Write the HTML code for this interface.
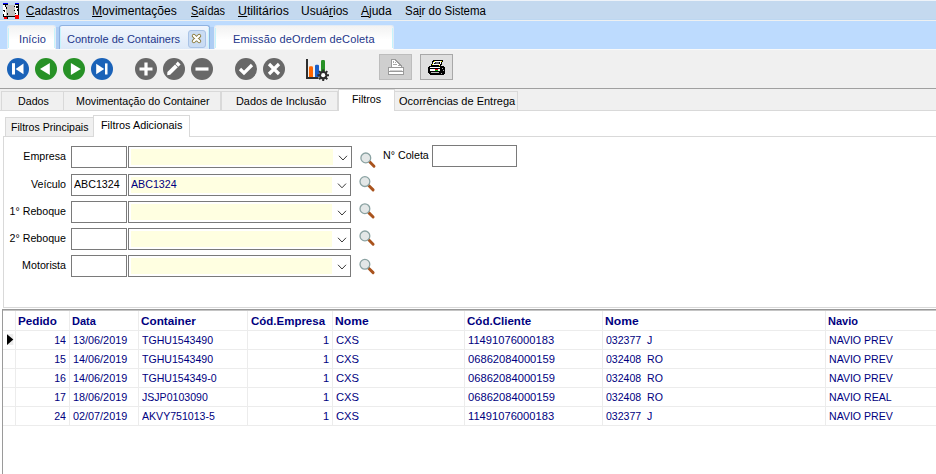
<!DOCTYPE html>
<html><head><meta charset="utf-8"><style>
*{margin:0;padding:0;box-sizing:border-box}
html,body{width:936px;height:474px;overflow:hidden}
body{position:relative;background:#fff;font-family:"Liberation Sans",sans-serif;font-size:11px;color:#000}
.a{position:absolute;white-space:nowrap}
.mn{font-size:12px;line-height:20px;top:1px;color:#000;transform-origin:0 0}
.mn u{text-decoration:none;position:relative}
.mn u::after{content:"";position:absolute;left:0;right:0;top:12px;height:1px;background:#000}
.tt{font-size:11px;line-height:20px;color:#23368a}
.pt{position:absolute;top:91px;height:20px;background:#f0f0f0;border:1px solid #d9d9d9;border-bottom:none}
.pl{font-size:11px;line-height:14px;color:#000;transform:scaleX(.97);transform-origin:0 0}
.box{position:absolute;border:1px solid #7a7a7a;background:#fff;height:22px}
.cb{position:absolute;border:1px solid #7a7a7a;background:#fff;height:22px}
.cb i{position:absolute;left:2px;top:2px;bottom:2px;background:#ffffe1}
.lbl{font-size:11px;line-height:14px;color:#000;transform:scaleX(.97);transform-origin:0 0}
.r{text-align:right;transform-origin:100% 0}
.hd{font-weight:bold;color:#000080;font-size:11px;line-height:14px;transform-origin:0 0}
.gd{color:#000080;font-size:11px;line-height:14px;transform:scaleX(.96);transform-origin:0 0}
.gr{text-align:right;transform-origin:100% 0}
.vl{position:absolute;top:311px;width:1px;height:114px;background:#ececec}
.hl{position:absolute;left:3px;width:933px;height:1px;background:#ececec}
</style></head><body>

<!-- menu bar -->
<div class="a" style="left:0;top:0;width:936px;height:20px;background:#c4d9ef"></div>
<div class="a" style="left:0;top:0;width:936px;height:1px;background:#eef3f9"></div>
<div class="a" style="left:0;top:19px;width:936px;height:1px;background:#bdd7f0"></div>
<div class="a" style="left:0;top:20px;width:936px;height:1px;background:#eef0f0"></div>
<!-- app icon -->
<svg class="a" style="left:0;top:0" width="22" height="22" viewBox="0 0 22 22" shape-rendering="crispEdges">
<rect x="3" y="5" width="16" height="12" fill="#fff"/>
<rect x="6" y="5" width="9" height="11" fill="#c0c0c0"/>
<rect x="3" y="3" width="5" height="1" fill="#0000ff"/><rect x="15" y="3" width="4" height="1" fill="#0000ff"/>
<rect x="3" y="4" width="5" height="1" fill="#000"/><rect x="15" y="4" width="4" height="1" fill="#000"/>
<rect x="5" y="5" width="1" height="2" fill="#000"/><rect x="6" y="7" width="1" height="2" fill="#000"/>
<rect x="3" y="10" width="2" height="1" fill="#000"/><rect x="4" y="11" width="1" height="1" fill="#000"/>
<rect x="7" y="13" width="1" height="2" fill="#000"/><rect x="3" y="14" width="1" height="3" fill="#000"/>
<rect x="14" y="6" width="1" height="1" fill="#000"/><rect x="16" y="6" width="2" height="2" fill="#000"/>
<rect x="18" y="4" width="1" height="6" fill="#000"/><rect x="17" y="9" width="1" height="2" fill="#000"/>
<rect x="14" y="10" width="1" height="1" fill="#000"/><rect x="18" y="10" width="1" height="5" fill="#000"/>
<rect x="15" y="13" width="1" height="1" fill="#000"/>
<rect x="3" y="16" width="12" height="1" fill="#000"/>
<rect x="4" y="17" width="3" height="2" fill="#ff0000"/><rect x="7" y="17" width="1" height="2" fill="#000"/>
<rect x="15" y="15" width="4" height="4" fill="#ff0000"/>
</svg>
<div class="a mn" style="left:26px;transform:scaleX(.974)"><u>C</u>adastros</div>
<div class="a mn" style="left:92px;transform:scaleX(1.01)"><u>M</u>ovimentações</div>
<div class="a mn" style="left:191px;transform:scaleX(.91)"><u>S</u>aídas</div>
<div class="a mn" style="left:238px;transform:scaleX(1.03)"><u>U</u>tilitários</div>
<div class="a mn" style="left:301px">Usuá<u>r</u>ios</div>
<div class="a mn" style="left:361px"><u>A</u>juda</div>
<div class="a mn" style="left:405px;transform:scaleX(.955)">Sa<u>i</u>r do Sistema</div>

<!-- tab strip -->
<div class="a" style="left:0;top:21px;width:936px;height:28px;background:#bddbfe"></div>
<div class="a" style="left:56px;top:27px;width:3px;height:22px;background:#aecdf4"></div>
<div class="a" style="left:210px;top:27px;width:4px;height:22px;background:#aecdf4"></div>
<div class="a" style="left:7px;top:25px;width:49px;height:24px;background:linear-gradient(#f2f2f2,#fff 60%);border:1px solid #e4ecf5;border-bottom:none;border-radius:3px 3px 0 0"></div>
<div class="a tt" style="left:19px;top:29px;letter-spacing:.1px">Início</div>
<div class="a" style="left:59px;top:25px;width:151px;height:24px;background:linear-gradient(#f1f6fd,#dde9f8);border:1px solid #8fb2e0;border-bottom:none;border-radius:3px 3px 0 0"></div>
<div class="a tt" style="left:67px;top:29px">Controle de Containers</div>
<div class="a" style="left:188px;top:30px;width:18px;height:18px;background:#cadcf3;border:1px solid #a9c3e6;border-radius:3px"></div>
<svg class="a" style="left:190px;top:32px" width="13" height="13" viewBox="0 0 13 13"><path d="M3.8 3.8L9.2 9.2M9.2 3.8L3.8 9.2" stroke="#8b7b3c" stroke-width="4" stroke-linecap="round"/><path d="M3.8 3.8L9.2 9.2M9.2 3.8L3.8 9.2" stroke="#fff" stroke-width="2.2" stroke-linecap="round"/></svg>
<div class="a" style="left:214px;top:25px;width:180px;height:24px;background:linear-gradient(#f2f2f2,#fff 60%);border:1px solid #e4ecf5;border-bottom:none;border-radius:3px 3px 0 0"></div>
<div class="a tt" style="left:233px;top:29px;letter-spacing:.15px">Emissão deOrdem deColeta</div>

<div class="a" style="left:8px;top:28px;width:1px;height:20px;background:#c6f4fc"></div>
<div class="a" style="left:54px;top:28px;width:1px;height:20px;background:#c6f4fc"></div>
<div class="a" style="left:60px;top:28px;width:1px;height:20px;background:#c6f4fc"></div>
<div class="a" style="left:208px;top:28px;width:1px;height:20px;background:#c6f4fc"></div>
<div class="a" style="left:215px;top:28px;width:1px;height:20px;background:#c6f4fc"></div>
<div class="a" style="left:392px;top:28px;width:1px;height:20px;background:#c6f4fc"></div>
<!-- toolbar -->
<div class="a" style="left:0;top:49px;width:936px;height:39px;background:#f0f0f0"></div>
<div class="a" style="left:0;top:49px;width:936px;height:1px;background:#f9f9f9"></div>
<div class="a" style="left:0;top:88px;width:936px;height:1px;background:#a0a0a0"></div>
<svg class="a" style="left:0;top:49px" width="340" height="39" viewBox="0 49 340 39">
<g>
<circle cx="18" cy="69" r="11" fill="#1a62b8"/>
<rect x="12" y="63.2" width="3" height="11.3" fill="#fff"/><path d="M15.6 68.9L23.5 63.6V74.2Z" fill="#fff"/>
<circle cx="46" cy="69" r="11" fill="#279126"/>
<path d="M40 69L49.8 63V75Z" fill="#fff"/>
<circle cx="74" cy="69" r="11" fill="#279126"/>
<path d="M80.8 69L70.9 63V75Z" fill="#fff"/>
<circle cx="102" cy="69" r="11" fill="#1a62b8"/>
<rect x="105" y="63.4" width="2.5" height="11.1" fill="#fff"/><path d="M104.2 68.9L96.2 63.8V74.2Z" fill="#fff"/>
</g>
<g>
<circle cx="146" cy="69" r="11" fill="#686868"/>
<path d="M146 62.5V75.5M139.5 69H152.5" stroke="#fff" stroke-width="3.2"/>
<circle cx="174" cy="69" r="11" fill="#686868"/>
<path d="M167.2 75.2L167.4 72L175 64.4L177.8 67.2L170.2 74.8Z" fill="#fff"/>
<path d="M175.5 63.9L177.8 61.6L180.6 64.4L178.3 66.7Z" fill="#fff"/>
<circle cx="202" cy="69" r="11" fill="#686868"/>
<path d="M195.5 69H208.5" stroke="#fff" stroke-width="3.2"/>
<circle cx="246" cy="69" r="11" fill="#686868"/>
<path d="M240 69L244 73L252 65" stroke="#fff" stroke-width="3.2" fill="none"/>
<circle cx="274" cy="69" r="11" fill="#686868"/>
<path d="M269 64L279 74M279 64L269 74" stroke="#fff" stroke-width="3.2"/>
</g>
<g>
<path d="M307 59V78H318.5" stroke="#2e2e2e" stroke-width="2" fill="none"/>
<path d="M309 77V67.5Q309 66.3 310.2 66.3H311.8Q313 66.3 313 67.5V77Z" fill="#ff6600"/>
<path d="M315 77V66Q315 64.8 316.2 64.8H317.8Q319 64.8 319 66V77Z" fill="#1a5fc8"/>
<path d="M321 72V61.2Q321 60 322.2 60H323.8Q325 60 325 61.2V72Z" fill="#279126"/>
<g transform="translate(323.2 75.2)">
<circle r="4.2" fill="#2e2e2e"/>
<path d="M-1 -5.8H1V5.8H-1ZM-5.8 -1H5.8V1H-5.8Z" fill="#2e2e2e"/>
<path d="M-1 -5.8H1V5.8H-1ZM-5.8 -1H5.8V1H-5.8Z" fill="#2e2e2e" transform="rotate(45)"/>
<circle r="2.1" fill="#fff"/>
</g>
</g>
</svg>
<div class="a" style="left:379px;top:54px;width:33px;height:26px;background:#cfcfcf;border:1px solid #bdbdbd"></div>
<svg class="a" style="left:387px;top:58px" width="18" height="18" viewBox="387 58 18 18" shape-rendering="crispEdges">
<path d="M391 59H396V60H397V61H398V62H399V63H400V64H401V65H402V67H391Z" fill="#9a9a9a"/>
<path d="M392 60H395V61H396V62H397V63H398V64H399V65H400V66H401V67H392Z" fill="#fff"/>
<path d="M393 61H394V63H393ZM395 62H396V63H395ZM393 64H397V65H393ZM398 65H400V66H398Z" fill="#a8a8a8"/>
<rect x="388" y="67" width="16" height="8" fill="#9a9a9a"/>
<rect x="389" y="68" width="14" height="3" fill="#fff"/>
<rect x="390" y="70" width="12" height="1" fill="#d0d0d0"/>
<rect x="389" y="72" width="14" height="2" fill="#fff"/>
</svg>
<div class="a" style="left:420px;top:54px;width:33px;height:26px;background:#dfdfdf;border:1px solid #a8a8a8"></div>
<svg class="a" style="left:427px;top:58px" width="20" height="18" viewBox="427 58 20 18" shape-rendering="crispEdges">
<path d="M433 60H443V61L441 66H431V65Z" fill="#000"/>
<path d="M434 61H442L440 65H432Z" fill="#fff"/>
<path d="M435 62H440V64H434Z" fill="#000"/><path d="M436 63H439V63.01H436Z" fill="#fff"/>
<rect x="435.5" y="62.6" width="3.5" height="0.8" fill="#fff" shape-rendering="auto"/>
<rect x="434" y="61" width="1" height="1" fill="#ff0"/><rect x="441" y="61" width="1" height="1" fill="#ff0"/>
<rect x="432" y="64" width="1" height="1" fill="#ff0"/><rect x="439" y="65" width="1" height="1" fill="#ff0"/>
<path d="M429 66H443L445 68V73L444 75H430L428 73V68Z" fill="#000"/>
<rect x="430" y="67" width="10" height="1" fill="#fff"/>
<rect x="430" y="69" width="5" height="2" fill="#fff"/>
<rect x="435" y="69" width="3" height="1" fill="#e00"/>
<rect x="435" y="70" width="3" height="1" fill="#1a1"/>
<rect x="438" y="69" width="2" height="2" fill="#fff"/>
<rect x="431" y="72" width="8" height="1" fill="#bbb"/>
<rect x="442" y="68" width="1" height="1" fill="#aaa"/><rect x="443" y="70" width="1" height="1" fill="#aaa"/><rect x="441" y="73" width="1" height="1" fill="#aaa"/>
</svg>

<!-- page tabs -->
<div class="a" style="left:0;top:89px;width:936px;height:21px;background:#f0f0f0"></div>
<div class="pt" style="left:1px;width:63px"></div>
<div class="a pl" style="left:18px;top:94px">Dados</div>
<div class="pt" style="left:63px;width:158px"></div>
<div class="a pl" style="left:76px;top:94px">Movimentação do Container</div>
<div class="pt" style="left:221px;width:117px"></div>
<div class="a pl" style="left:236px;top:94px;transform:scaleX(.99)">Dados de Inclusão</div>
<div class="a" style="left:338px;top:89px;width:57px;height:22px;background:#fff;border:1px solid #d9d9d9;border-bottom:none"></div>
<div class="a pl" style="left:352px;top:92px">Filtros</div>
<div class="pt" style="left:394px;width:124px"></div>
<div class="a pl" style="left:399px;top:94px;transform:none">Ocorrências de Entrega</div>
<div class="a" style="left:0;top:110px;width:936px;height:1px;background:#d9d9d9"></div>
<div class="a" style="left:339px;top:110px;width:55px;height:1px;background:#fff"></div>

<!-- sub tabs -->
<div class="a" style="left:5px;top:117px;width:89px;height:20px;background:#f0f0f0;border:1px solid #d9d9d9;border-bottom:none"></div>
<div class="a lbl" style="left:11px;top:120px;transform:scaleX(.96)">Filtros Principais</div>
<div class="a" style="left:93px;top:115px;width:97px;height:22px;background:#fff;border:1px solid #d9d9d9;border-bottom:none"></div>
<div class="a lbl" style="left:101px;top:118px;transform:scaleX(.985)">Filtros Adicionais</div>
<!-- panel -->
<div class="a" style="left:3px;top:136px;width:940px;height:172px;border:1px solid #d9d9d9;border-right:none;background:transparent"></div>
<div class="a" style="left:94px;top:136px;width:95px;height:1px;background:#fff"></div>

<!-- form rows -->
<div class="a lbl r" style="left:0;width:66px;top:149px">Empresa</div>
<div class="box" style="left:71px;top:146px;width:56px"></div>
<div class="cb" style="left:128px;top:146px;width:224px"><i style="width:202px"></i></div>
<div class="a lbl r" style="left:0;width:66px;top:177px">Veículo</div>
<div class="box" style="left:71px;top:174px;width:56px"></div>
<div class="a lbl" style="left:74px;top:177px">ABC1324</div>
<div class="cb" style="left:128px;top:174px;width:223px"><i style="width:201px"></i></div>
<div class="a lbl" style="left:131px;top:177px;color:#000080">ABC1324</div>
<div class="a lbl r" style="left:0;width:66px;top:204px">1° Reboque</div>
<div class="box" style="left:71px;top:201px;width:56px"></div>
<div class="cb" style="left:128px;top:201px;width:223px"><i style="width:201px"></i></div>
<div class="a lbl r" style="left:0;width:66px;top:231px">2° Reboque</div>
<div class="box" style="left:71px;top:228px;width:56px"></div>
<div class="cb" style="left:128px;top:228px;width:223px"><i style="width:201px"></i></div>
<div class="a lbl r" style="left:0;width:66px;top:258px">Motorista</div>
<div class="box" style="left:71px;top:255px;width:56px"></div>
<div class="cb" style="left:128px;top:255px;width:223px"><i style="width:201px"></i></div>
<div class="a lbl" style="left:383px;top:148px">N° Coleta</div>
<div class="box" style="left:432px;top:145px;width:85px"></div>

<!-- chevrons + magnifiers -->
<svg class="a" style="left:0;top:140px" width="380" height="145" viewBox="0 140 380 145">
<defs>
<g id="chev"><path d="M0 0L4 4.2L8 0" stroke="#3a3a3a" stroke-width="1" fill="none"/></g>
<g id="mag"><path d="M3.8 3.6L8.2 8" stroke="#a9531d" stroke-width="2.9" stroke-linecap="round"/><circle cx="0" cy="-0.3" r="4.9" fill="#e3e7e7" stroke="#8aa2a2" stroke-width="1.3"/></g>
</defs>
<use href="#chev" x="339" y="155.8"/>
<use href="#chev" x="338" y="183.6"/>
<use href="#chev" x="338" y="210.8"/>
<use href="#chev" x="338" y="237.8"/>
<use href="#chev" x="338" y="264.8"/>
<use href="#mag" x="365.8" y="158.2"/>
<use href="#mag" x="364.9" y="181.9"/>
<use href="#mag" x="364.9" y="209"/>
<use href="#mag" x="364.9" y="236.2"/>
<use href="#mag" x="364.9" y="264.6"/>
</svg>

<!-- grid -->
<div class="a" style="left:2px;top:309px;width:934px;height:1px;background:#999"></div>
<div class="a" style="left:3px;top:310px;width:933px;height:1px;background:#c4c4c4"></div>
<div class="a" style="left:2px;top:309px;width:1px;height:165px;background:#9a9a9a"></div>
<div class="vl" style="left:15px"></div>
<div class="vl" style="left:69px"></div>
<div class="vl" style="left:138px"></div>
<div class="vl" style="left:247px"></div>
<div class="vl" style="left:332px"></div>
<div class="vl" style="left:464px"></div>
<div class="vl" style="left:602px"></div>
<div class="vl" style="left:825px"></div>
<div class="hl" style="top:330px"></div>
<div class="hl" style="top:349px"></div>
<div class="hl" style="top:368px"></div>
<div class="hl" style="top:387px"></div>
<div class="hl" style="top:406px"></div>
<div class="hl" style="top:425px"></div>
<svg class="a" style="left:6px;top:333px" width="9" height="13" viewBox="6 333 9 13"><rect x="7" y="334" width="6.3" height="11" fill="#ececec"/><path d="M7 334.2L13.3 339.6L7 345Z" fill="#000"/></svg>

<div class="a hd" style="left:18px;top:314px;transform:scaleX(1.06)">Pedido</div>
<div class="a hd" style="left:72px;top:314px">Data</div>
<div class="a hd" style="left:141px;top:314px;transform:scaleX(1.066)">Container</div>
<div class="a hd" style="left:251px;top:314px;transform:scaleX(1.044)">Cód.Empresa</div>
<div class="a hd" style="left:335px;top:314px;transform:scaleX(1.1)">Nome</div>
<div class="a hd" style="left:467px;top:314px;transform:scaleX(1.05)">Cód.Cliente</div>
<div class="a hd" style="left:605px;top:314px;transform:scaleX(1.1)">Nome</div>
<div class="a hd" style="left:828px;top:314px">Navio</div>

<div class="a gd gr" style="left:0;top:333px;width:66px">14</div>
<div class="a gd" style="left:73px;top:333px;transform:scaleX(.985)">13/06/2019</div>
<div class="a gd" style="left:142px;top:333px">TGHU1543490</div>
<div class="a gd gr" style="left:0;top:333px;width:329px;transform:none">1</div>
<div class="a gd" style="left:336px;top:333px;transform:scaleX(1.02)">CXS</div>
<div class="a gd" style="left:468px;top:333px;transform:scaleX(1.015)">11491076000183</div>
<div class="a gd" style="left:606px;top:333px">032377&nbsp; J</div>
<div class="a gd" style="left:829px;top:333px">NAVIO PREV</div>

<div class="a gd gr" style="left:0;top:352px;width:66px">15</div>
<div class="a gd" style="left:73px;top:352px;transform:scaleX(.985)">14/06/2019</div>
<div class="a gd" style="left:142px;top:352px">TGHU1543490</div>
<div class="a gd gr" style="left:0;top:352px;width:329px;transform:none">1</div>
<div class="a gd" style="left:336px;top:352px;transform:scaleX(1.02)">CXS</div>
<div class="a gd" style="left:468px;top:352px;transform:scaleX(1.015)">06862084000159</div>
<div class="a gd" style="left:606px;top:352px">032408&nbsp; RO</div>
<div class="a gd" style="left:829px;top:352px">NAVIO PREV</div>

<div class="a gd gr" style="left:0;top:371px;width:66px">16</div>
<div class="a gd" style="left:73px;top:371px;transform:scaleX(.985)">14/06/2019</div>
<div class="a gd" style="left:142px;top:371px">TGHU154349-0</div>
<div class="a gd gr" style="left:0;top:371px;width:329px;transform:none">1</div>
<div class="a gd" style="left:336px;top:371px;transform:scaleX(1.02)">CXS</div>
<div class="a gd" style="left:468px;top:371px;transform:scaleX(1.015)">06862084000159</div>
<div class="a gd" style="left:606px;top:371px">032408&nbsp; RO</div>
<div class="a gd" style="left:829px;top:371px">NAVIO PREV</div>

<div class="a gd gr" style="left:0;top:390px;width:66px">17</div>
<div class="a gd" style="left:73px;top:390px;transform:scaleX(.985)">18/06/2019</div>
<div class="a gd" style="left:142px;top:390px">JSJP0103090</div>
<div class="a gd gr" style="left:0;top:390px;width:329px;transform:none">1</div>
<div class="a gd" style="left:336px;top:390px;transform:scaleX(1.02)">CXS</div>
<div class="a gd" style="left:468px;top:390px;transform:scaleX(1.015)">06862084000159</div>
<div class="a gd" style="left:606px;top:390px">032408&nbsp; RO</div>
<div class="a gd" style="left:829px;top:390px">NAVIO REAL</div>

<div class="a gd gr" style="left:0;top:409px;width:66px">24</div>
<div class="a gd" style="left:73px;top:409px;transform:scaleX(.985)">02/07/2019</div>
<div class="a gd" style="left:142px;top:409px">AKVY751013-5</div>
<div class="a gd gr" style="left:0;top:409px;width:329px;transform:none">1</div>
<div class="a gd" style="left:336px;top:409px;transform:scaleX(1.02)">CXS</div>
<div class="a gd" style="left:468px;top:409px;transform:scaleX(1.015)">11491076000183</div>
<div class="a gd" style="left:606px;top:409px">032377&nbsp; J</div>
<div class="a gd" style="left:829px;top:409px">NAVIO PREV</div>

</body></html>
